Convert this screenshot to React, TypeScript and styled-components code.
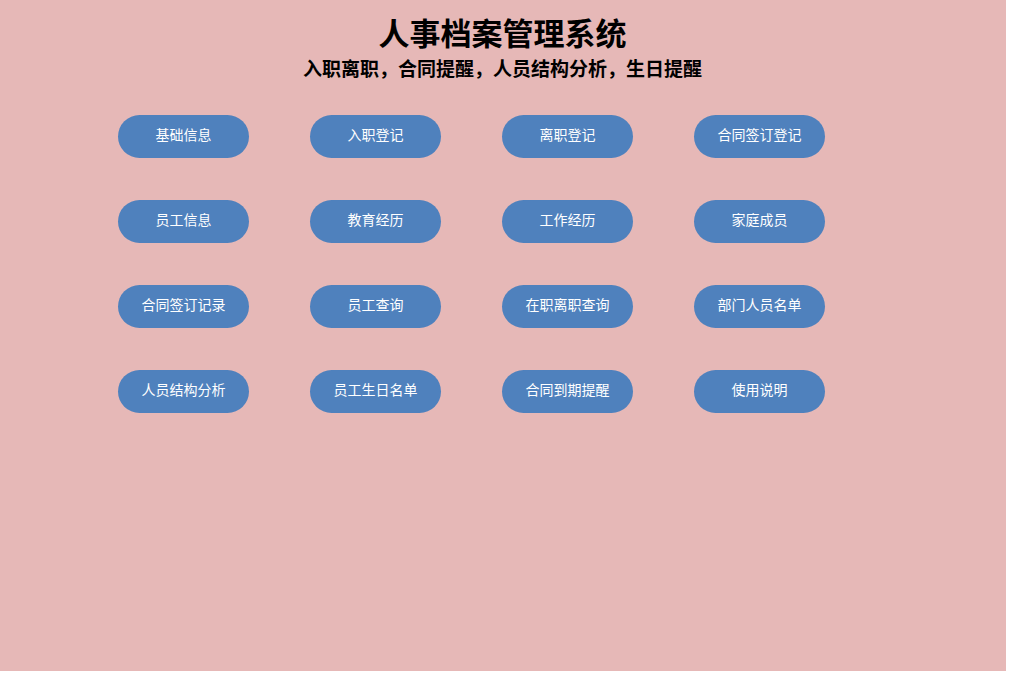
import styled, { createGlobalStyle } from "styled-components";

const menuItems = [
  "基础信息",
  "入职登记",
  "离职登记",
  "合同签订登记",
  "员工信息",
  "教育经历",
  "工作经历",
  "家庭成员",
  "合同签订记录",
  "员工查询",
  "在职离职查询",
  "部门人员名单",
  "人员结构分析",
  "员工生日名单",
  "合同到期提醒",
  "使用说明",
];

const GlobalStyle = createGlobalStyle`
  html, body {
    margin: 0;
    padding: 0;
    background: #fff;
  }
  body {
    font-family: "Microsoft YaHei", "Noto Sans CJK SC", sans-serif;
  }
`;

function App() {
  return (
    <>
      <GlobalStyle />
      <Page>
        <Header>
          <Title>人事档案管理系统</Title>
          <Subtitle>入职离职，合同提醒，人员结构分析，生日提醒</Subtitle>
        </Header>
        <MenuGrid>
          {menuItems.map((item) => (
            <MenuButton key={item}>{item}</MenuButton>
          ))}
        </MenuGrid>
      </Page>
    </>
  );
}

export default App;

const Page = styled.div`
  width: 1006px;
  height: 671px;
  background: #e6b8b7;
  box-sizing: border-box;
  padding-top: 12px;
`;

const Header = styled.div`
  display: flex;
  flex-direction: column;
  align-items: center;
  width: 1005px;
`;

const Title = styled.h1`
  margin: 0;
  font-family: "Noto Sans CJK SC", sans-serif;
  font-size: 31px;
  font-weight: 700;
  line-height: 40px;
  color: #000;
`;

const Subtitle = styled.h2`
  margin: 0;
  font-family: "Noto Sans CJK SC", sans-serif;
  font-size: 19px;
  font-weight: 700;
  line-height: 32px;
  color: #000;
`;

const MenuGrid = styled.div`
  display: grid;
  grid-template-columns: repeat(4, 131px);
  column-gap: 61px;
  row-gap: 42px;
  margin-top: 31px;
  padding-left: 118px;
`;

const MenuButton = styled.button`
  height: 43px;
  border: none;
  border-radius: 22px;
  background: #4f81bd;
  color: #fff;
  font-family: "Noto Sans CJK SC", sans-serif;
  font-size: 14px;
  padding: 0 0 5px;
  cursor: pointer;
`;
